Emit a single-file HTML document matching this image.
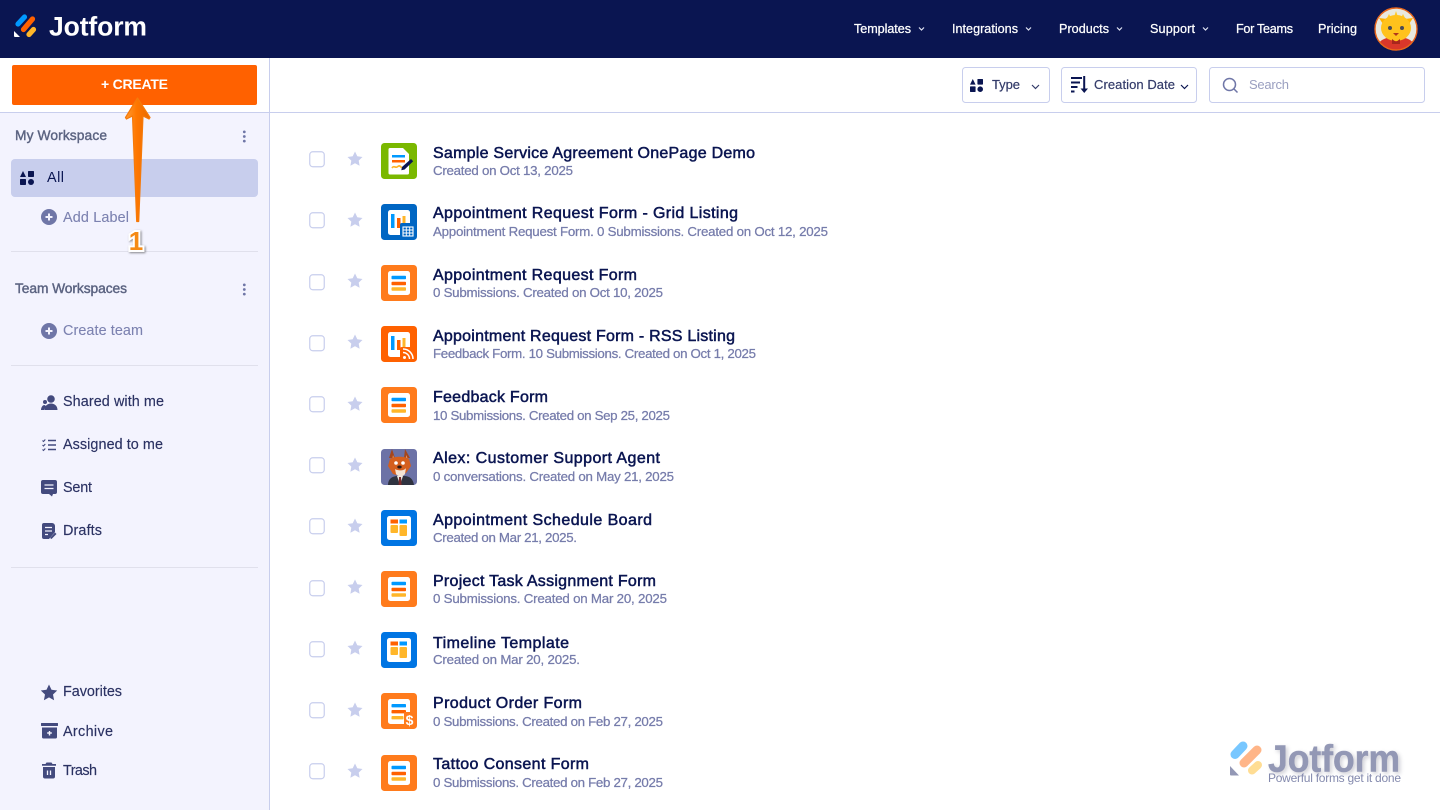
<!DOCTYPE html>
<html lang="en"><head><meta charset="utf-8"><title>Jotform</title>
<style>
html,body{margin:0;padding:0;width:1440px;height:810px;overflow:hidden;background:#fff}
svg{display:block}
text{font-family:"Liberation Sans",sans-serif}
.t{font-size:16px;fill:#0a1551;stroke:#0a1551;stroke-width:.5px}
.s{font-size:13.300px;fill:#767cab;stroke:#767cab;stroke-width:.25px}
.n{font-size:12.600px;fill:#fff;stroke:#fff;stroke-width:.25px}
.h{font-size:13.800px;fill:#5b6381;stroke:#5b6381;stroke-width:.4px}
.l{font-size:14.400px;fill:#2b3263;stroke:#2b3263;stroke-width:.15px}
.a{font-size:14.400px;fill:#7c82b0;stroke:#7c82b0;stroke-width:.1px}
.b{font-size:13px;fill:#343c6a;stroke:#343c6a;stroke-width:.2px}
</style></head><body>
<svg width="1440" height="810" viewBox="0 0 1440 810" xmlns="http://www.w3.org/2000/svg">
<defs>
<symbol id="cb" viewBox="0 0 16 17" overflow="visible"><rect x=".75" y=".75" width="14.500" height="15" rx="3" fill="#fff" stroke="#c8ceed" stroke-width="1.200"/></symbol>
<symbol id="st" viewBox="0 0 16 16"><path d="M8 .5l2.300 4.800 5.200.7-3.800 3.600.9 5.200L8 12.300l-4.600 2.500.9-5.200L.5 6l5.200-.7z" fill="#c8ceed"/></symbol>
<symbol id="form" viewBox="0 0 36 36"><rect width="36" height="36" rx="3.500" fill="#ff7b1c"/><rect x="7" y="6" width="22" height="24" rx="2.500" fill="#fff"/><rect x="10.500" y="10.800" width="14.500" height="3.400" rx=".8" fill="#0099ff"/><rect x="10.500" y="16.800" width="14.500" height="3.400" rx=".8" fill="#ff6100"/><rect x="10.500" y="22.300" width="14.500" height="3.400" rx=".8" fill="#ffb629"/></symbol>
<symbol id="app" viewBox="0 0 36 36"><rect width="36" height="36" rx="3.500" fill="#0075e3"/><rect x="6" y="6" width="24" height="24" rx="2.500" fill="#fff"/><rect x="9.500" y="9.500" width="7.500" height="4" fill="#ff6100"/><rect x="18.500" y="9.500" width="7.500" height="4" fill="#0099ff"/><rect x="9.500" y="15" width="7.500" height="8" rx="1" fill="#ffb629"/><rect x="18.500" y="15" width="7.500" height="11" rx="1" fill="#ffb629"/></symbol>
<symbol id="plus" viewBox="0 0 16 16"><circle cx="8" cy="8" r="8" fill="#6f76a7"/><path d="M8 4.500v7M4.500 8h7" stroke="#f3f3fe" stroke-width="2"/></symbol>
<symbol id="dots" viewBox="0 0 4 14"><circle cx="2" cy="2" r="1.500" fill="#6f76a7"/><circle cx="2" cy="7" r="1.500" fill="#6f76a7"/><circle cx="2" cy="12" r="1.500" fill="#6f76a7"/></symbol>
<symbol id="types" viewBox="0 0 14 14"><path d="M3 0l3 6H0z" fill="currentColor"/><rect x="8" y="0" width="6" height="6" rx=".7" fill="currentColor"/><rect x="0" y="8" width="6" height="6" rx=".7" fill="currentColor"/><circle cx="11" cy="11" r="3" fill="currentColor"/></symbol>
</defs>

<!-- sidebar -->
<rect x="0" y="113" width="269" height="697" fill="#f3f3fe"/>
<rect x="269" y="58" width="1" height="752" fill="#c8ceed"/>
<rect x="0" y="112" width="1440" height="1" fill="#c8ceed"/>

<!-- header -->
<rect width="1440" height="58" fill="#0a1551"/>
<path d="M18 24L24.500 17" stroke="#0099ff" stroke-width="5.200" stroke-linecap="round"/>
<path d="M23.500 29.500L32.500 19" stroke="#ff6100" stroke-width="5.200" stroke-linecap="round"/>
<path d="M29 34.500L33.500 29.500" stroke="#ffb629" stroke-width="5.200" stroke-linecap="round"/>
<path d="M14 31l6 6h-5a1 1 0 0 1-1-1z" fill="#fff"/>
<text x="49" y="35.500" font-size="26.500" font-weight="700" fill="#fff" textLength="98">Jotform</text>

<g class="nav">
<text class="n" x="854" y="33" textLength="57">Templates</text>
<text class="n" x="952" y="33" textLength="66">Integrations</text>
<text class="n" x="1059" y="33" textLength="50">Products</text>
<text class="n" x="1150" y="33" textLength="45">Support</text>
<text class="n" x="1236" y="33" textLength="57">For Teams</text>
<text class="n" x="1318" y="33" textLength="39">Pricing</text>
<g fill="none" stroke="#dfe2f2" stroke-width="1.200">
<path d="M919 27.500l2.500 2.500 2.500-2.500"/><path d="M1026 27.500l2.500 2.500 2.500-2.500"/><path d="M1117 27.500l2.500 2.500 2.500-2.500"/><path d="M1203 27.500l2.500 2.500 2.500-2.500"/>
</g>
</g>

<!-- avatar -->
<circle cx="1396" cy="29" r="21.500" fill="#e9e9de"/>
<clipPath id="av"><circle cx="1396" cy="29" r="21"/></clipPath>
<g clip-path="url(#av)">
<path d="M1375 52c2-12 10-15 21-15s19 3 21 15z" fill="#d9372a"/>
<path d="M1383 24l-4-6 8 1zM1409 24l4-6-8 1z" fill="#ffb100"/>
<path d="M1389 14l2 4h-4zM1396 11l2 6h-4zM1403 14l2 4h-4z" fill="#ffc828"/>
<ellipse cx="1396" cy="28" rx="15" ry="13" fill="#ffc21c"/>
<circle cx="1390" cy="28" r="2" fill="#4a4a55"/><circle cx="1402" cy="28" r="2" fill="#4a4a55"/>
<path d="M1393 33h6l-3 3z" fill="#b0371c"/>
<path d="M1392 39l4 3 4-3v5h-8z" fill="#a8261c"/>
</g>
<circle cx="1396" cy="29" r="21" fill="none" stroke="#e8651a" stroke-width="1.400"/>

<!-- create -->
<rect x="12" y="65" width="245" height="40" rx="2" fill="#ff6100"/>
<text x="101" y="89" font-size="14" font-weight="700" fill="#fff" textLength="67">+ CREATE</text>

<!-- toolbar -->
<rect x="962.500" y="67.500" width="87" height="35" rx="3" fill="#fff" stroke="#c8ceed"/>
<use href="#types" x="970" y="79" width="13" height="13" color="#0a1551"/>
<text class="b" x="992" y="89" textLength="28">Type</text>
<path d="M1032 85l3.500 3.500 3.500-3.500" fill="none" stroke="#343c6a" stroke-width="1.200"/>
<rect x="1061.500" y="67.500" width="135" height="35" rx="3" fill="#fff" stroke="#c8ceed"/>
<g fill="#0a1551"><rect x="1071" y="77" width="11" height="2"/><rect x="1071" y="81.500" width="9" height="2"/><rect x="1071" y="86" width="6.500" height="2"/><rect x="1071" y="90.500" width="3.500" height="2"/><rect x="1083.200" y="76" width="2" height="15"/><path d="M1080.500 88.500h7.500l-3.750 4.500z"/></g>
<text class="b" x="1094" y="89" textLength="81">Creation Date</text>
<path d="M1181 85l3.500 3.500 3.500-3.500" fill="none" stroke="#0a1551" stroke-width="1.200"/>
<rect x="1209.500" y="67.500" width="215" height="35" rx="3" fill="#fff" stroke="#c8ceed"/>
<circle cx="1229.500" cy="84.500" r="6" fill="none" stroke="#6f76a7" stroke-width="1.500"/>
<path d="M1234 89l3.500 3.500" stroke="#6f76a7" stroke-width="1.500"/>
<text x="1249" y="89" font-size="13" fill="#9a9fc0" textLength="40">Search</text>

<!-- sidebar content -->
<text class="h" x="15" y="140" textLength="92">My Workspace</text>
<use href="#dots" x="242.300" y="130" width="4" height="13"/>
<rect x="11" y="159" width="247" height="38" rx="4" fill="#c8ceed"/>
<use href="#types" x="20" y="171" width="14" height="14" color="#0a1551"/>
<text x="47" y="182" font-size="14.400" fill="#0a1551" textLength="17">All</text>
<use href="#plus" x="41" y="209" width="16" height="16"/>
<text class="a" x="63" y="222" textLength="66">Add Label</text>
<rect x="11" y="251" width="247" height="1" fill="#e0e0ec"/>
<text class="h" x="15" y="293" textLength="112">Team Workspaces</text>
<use href="#dots" x="242.300" y="283" width="4" height="13"/>
<use href="#plus" x="41" y="323" width="16" height="16"/>
<text class="a" x="63" y="335" textLength="80">Create team</text>
<rect x="11" y="365" width="247" height="1" fill="#e0e0ec"/>

<g fill="#434a7e">
<circle cx="51" cy="399" r="3.800"/><path d="M44.500 410c0-4 3-6.500 6.500-6.500s6.500 2.500 6.500 6.500z"/><circle cx="45" cy="402" r="2"/><path d="M41 410c0-2.500 1.500-5 3.500-5l1.500 1-2 4z"/>
</g>
<text class="l" x="63" y="406" textLength="101">Shared with me</text>
<g stroke="#434a7e" fill="none" stroke-width="1.400"><path d="M48 440.500h8M48 445h8M48 449.500h8"/><path d="M42.500 440.500l1 1 1.800-2M42.500 445l1 1 1.800-2M42.500 449.500l1 1 1.800-2" stroke-width="1.100"/></g>
<text class="l" x="63" y="449" textLength="100">Assigned to me</text>
<path d="M43 480h12a2 2 0 0 1 2 2v10a2 2 0 0 1-2 2h-2l-1 2.500-3-2.500h-6a2 2 0 0 1-2-2v-10a2 2 0 0 1 2-2z" fill="#434a7e"/><path d="M44.500 485h9M44.500 488.500h9" stroke="#f3f3fe" stroke-width="1.300"/>
<text class="l" x="63" y="492" textLength="29">Sent</text>
<path d="M44 523h8a3 3 0 0 1 3 3v6l-6 7h-5a2 2 0 0 1-2-2v-12a2 2 0 0 1 2-2z" fill="#434a7e"/><path d="M45 527.500h7M45 531h7M45 534.500h3" stroke="#f3f3fe" stroke-width="1.200"/><path d="M50 538l5-5.500 1.500 1.500-5 5z" fill="#434a7e"/>
<text class="l" x="63" y="535" textLength="39">Drafts</text>
<rect x="11" y="567" width="247" height="1" fill="#e0e0ec"/>

<path d="M49 684.500l2.500 5.300 5.700.7-4.200 4 1.100 5.700-5.100-2.800-5.100 2.800 1.100-5.700-4.200-4 5.700-.7z" fill="#434a7e"/>
<text class="l" x="63" y="696" textLength="59">Favorites</text>
<rect x="41" y="723" width="17" height="3" rx=".5" fill="#434a7e"/><path d="M42 727.500h15v9.500a1.500 1.500 0 0 1-1.500 1.500h-12a1.500 1.500 0 0 1-1.500-1.500z" fill="#434a7e"/><path d="M49.500 731v4.500M47.200 733h4.600" stroke="#f3f3fe" stroke-width="1.400"/>
<text class="l" x="63" y="736" textLength="50">Archive</text>
<path d="M45.500 764l1-1.500h5l1 1.500h3.500v1.800H42V764z" fill="#434a7e"/><path d="M43 767h12v9.500a2 2 0 0 1-2 2h-8a2 2 0 0 1-2-2z" fill="#434a7e"/><path d="M47.500 770.500v4.500M50.500 770.500v4.500" stroke="#f3f3fe" stroke-width="1.300"/>
<text class="l" x="63" y="775" textLength="34">Trash</text>

<!-- list -->
<use href="#cb" x="309" y="151" width="16" height="17"/><use href="#st" x="347" y="151" width="16" height="16"/>
<use href="#cb" x="309" y="212" width="16" height="17"/><use href="#st" x="347" y="212" width="16" height="16"/>
<use href="#cb" x="309" y="274" width="16" height="17"/><use href="#st" x="347" y="273" width="16" height="16"/>
<use href="#cb" x="309" y="335" width="16" height="17"/><use href="#st" x="347" y="334" width="16" height="16"/>
<use href="#cb" x="309" y="396" width="16" height="17"/><use href="#st" x="347" y="396" width="16" height="16"/>
<use href="#cb" x="309" y="457" width="16" height="17"/><use href="#st" x="347" y="457" width="16" height="16"/>
<use href="#cb" x="309" y="518" width="16" height="17"/><use href="#st" x="347" y="518" width="16" height="16"/>
<use href="#cb" x="309" y="580" width="16" height="17"/><use href="#st" x="347" y="579" width="16" height="16"/>
<use href="#cb" x="309" y="641" width="16" height="17"/><use href="#st" x="347" y="640" width="16" height="16"/>
<use href="#cb" x="309" y="702" width="16" height="17"/><use href="#st" x="347" y="702" width="16" height="16"/>
<use href="#cb" x="309" y="763" width="16" height="17"/><use href="#st" x="347" y="763" width="16" height="16"/>

<!-- icon 1 sign doc -->
<g transform="translate(381 143)"><rect width="36" height="36" rx="3.500" fill="#7ab800"/><path d="M9 5h13l6 6v19a1.500 1.500 0 0 1-1.500 1.500h-17.500a1.500 1.500 0 0 1-1.500-1.500V6.500A1.500 1.500 0 0 1 9 5z" fill="#fff"/><rect x="11" y="12" width="13" height="2.500" fill="#0099ff"/><rect x="11" y="17" width="13" height="2.500" fill="#ff6100"/><path d="M11 25c2-3 3 0 5-1s2-2 4 0 3-1 4-1" fill="none" stroke="#ffb629" stroke-width="1.700"/><path d="M21 24l9-8 2.200 2.300-8.600 8.200-3.300.8z" fill="#0a1551"/></g>
<!-- icon 2 grid -->
<g transform="translate(381 204)"><rect width="36" height="36" rx="3.500" fill="#0066c3"/><rect x="7" y="6" width="22" height="25" rx="2.500" fill="#fff"/><rect x="10" y="10" width="3.500" height="14" fill="#0099ff"/><rect x="16" y="14" width="3.500" height="10" fill="#ff6100"/><rect x="21.500" y="12" width="3" height="12" fill="#ffb629"/><rect x="19" y="19" width="16" height="16" rx="2" fill="#0066c3"/><rect x="22" y="23" width="10" height="9" fill="none" stroke="#fff" stroke-width="1.100"/><path d="M22 26h10M22 29h10M25.300 23v9M28.700 23v9" stroke="#fff" stroke-width=".9"/></g>
<use href="#form" x="381" y="265" width="36" height="36"/>
<!-- icon 4 rss -->
<g transform="translate(381 326)"><rect width="36" height="36" rx="3.500" fill="#ff6100"/><rect x="7" y="6" width="22" height="25" rx="2.500" fill="#fff"/><rect x="10" y="10" width="3.500" height="14" fill="#0099ff"/><rect x="16" y="14" width="3.500" height="10" fill="#ff6100"/><rect x="21.500" y="12" width="3" height="12" fill="#ffb629"/><rect x="19" y="21" width="16" height="14" rx="2" fill="#ff6100"/><circle cx="23.500" cy="31.500" r="1.500" fill="#fff"/><path d="M22 26.500a6.500 6.500 0 0 1 6.500 6.500M22 23a10 10 0 0 1 10 10" fill="none" stroke="#fff" stroke-width="1.500"/></g>
<use href="#form" x="381" y="387" width="36" height="36"/>
<!-- icon 6 alex -->
<g transform="translate(381 449)"><clipPath id="ax"><rect width="36" height="36" rx="3.500"/></clipPath><g clip-path="url(#ax)"><rect width="36" height="36" fill="#6c72a6"/>
<path d="M11 0l3 9-6 0zM24 0l-1 9 6 0z" fill="#a5461c"/><path d="M12 6l2 6h-3zM25 6l0 6h3z" fill="#e7a27a"/>
<path d="M9 10c3-3 16-3 19 0l2 7-5 7-6 3-7-2-5-8z" fill="#d45f1e"/>
<path d="M14 20c3 2 9 2 11-1l-1 6c-2 3-7 3-9 0z" fill="#f4e4d4"/>
<circle cx="15" cy="14" r="1.800" fill="#fff"/><circle cx="22" cy="14" r="1.800" fill="#fff"/><ellipse cx="18.500" cy="18" rx="2.200" ry="1.500" fill="#2a1a18"/>
<path d="M7 36c0-6 4-9 10-9h6c6 0 9 3 10 9z" fill="#2f3340"/><path d="M16 27l3 9 3-9z" fill="#f0ece6"/><path d="M18 28h2l.6 8h-3z" fill="#7a2a2a"/></g></g>
<use href="#app" x="381" y="510" width="36" height="36"/>
<use href="#form" x="381" y="571" width="36" height="36"/>
<use href="#app" x="381" y="632" width="36" height="36"/>
<!-- icon 10 product -->
<g transform="translate(381 693)"><rect width="36" height="36" rx="3.500" fill="#ff7b1c"/><rect x="7" y="6" width="22" height="25" rx="2.500" fill="#fff"/><rect x="10.500" y="11" width="14.500" height="3.400" rx=".8" fill="#0099ff"/><rect x="10.500" y="17" width="14.500" height="3.400" rx=".8" fill="#ff6100"/><rect x="10.500" y="23" width="12" height="3.400" rx=".8" fill="#ffb629"/><rect x="23" y="19" width="12" height="16" fill="#ff7b1c"/><text x="28.500" y="32" font-size="14" font-weight="700" fill="#fff" text-anchor="middle">$</text></g>
<use href="#form" x="381" y="755" width="36" height="36"/>

<text class="t" x="433" y="158" textLength="322">Sample Service Agreement OnePage Demo</text>
<text class="s" x="433" y="175" textLength="140">Created on Oct 13, 2025</text>
<text class="t" x="433" y="218" textLength="305">Appointment Request Form - Grid Listing</text>
<text class="s" x="433" y="236" textLength="395">Appointment Request Form. 0 Submissions. Created on Oct 12, 2025</text>
<text class="t" x="433" y="280" textLength="204">Appointment Request Form</text>
<text class="s" x="433" y="297" textLength="230">0 Submissions. Created on Oct 10, 2025</text>
<text class="t" x="433" y="341" textLength="302">Appointment Request Form - RSS Listing</text>
<text class="s" x="433" y="358" textLength="323">Feedback Form. 10 Submissions. Created on Oct 1, 2025</text>
<text class="t" x="433" y="402" textLength="115">Feedback Form</text>
<text class="s" x="433" y="420" textLength="237">10 Submissions. Created on Sep 25, 2025</text>
<text class="t" x="433" y="463" textLength="227">Alex: Customer Support Agent</text>
<text class="s" x="433" y="481" textLength="241">0 conversations. Created on May 21, 2025</text>
<text class="t" x="433" y="525" textLength="219">Appointment Schedule Board</text>
<text class="s" x="433" y="542" textLength="144">Created on Mar 21, 2025.</text>
<text class="t" x="433" y="586" textLength="223">Project Task Assignment Form</text>
<text class="s" x="433" y="603" textLength="234">0 Submissions. Created on Mar 20, 2025</text>
<text class="t" x="433" y="648" textLength="136">Timeline Template</text>
<text class="s" x="433" y="664" textLength="147">Created on Mar 20, 2025.</text>
<text class="t" x="433" y="708" textLength="149">Product Order Form</text>
<text class="s" x="433" y="726" textLength="230">0 Submissions. Created on Feb 27, 2025</text>
<text class="t" x="433" y="769" textLength="156">Tattoo Consent Form</text>
<text class="s" x="433" y="787" textLength="230">0 Submissions. Created on Feb 27, 2025</text>

<!-- arrow -->
<linearGradient id="ag" x1="0" y1="0" x2="1" y2="0"><stop offset="0" stop-color="#ff9a30"/><stop offset=".45" stop-color="#ff7700"/><stop offset="1" stop-color="#e86a00"/></linearGradient>
<path d="M137.500 98l12.500 19.500-1 1.500-6-3-4.300 105.500h-2l-4.200-105.500-6 3-1-1.500z" fill="url(#ag)" stroke="#f57a0a" stroke-width="1.200" stroke-linejoin="round"/>
<text x="136" y="250" font-size="26" font-weight="700" text-anchor="middle" fill="#f58a14" stroke="#fff" stroke-width="4" paint-order="stroke" style="filter:drop-shadow(1px 1px 1px rgba(40,40,40,.55))">1</text>

<!-- watermark -->
<g opacity=".55">
<path d="M1235 754.500L1243 746" stroke="#0a9bff" stroke-width="9" stroke-linecap="round"/>
<path d="M1244 763L1257 750" stroke="#ff7a28" stroke-width="9" stroke-linecap="round"/>
<path d="M1252 770.500L1258 765" stroke="#ffc23e" stroke-width="8" stroke-linecap="round"/>
<path d="M1230 766l9 9.500h-8a1 1 0 0 1-1-1z" fill="#3c4479"/>
<text x="1268" y="771.500" font-size="38" font-weight="700" fill="#3c4479" stroke="#3c4479" stroke-width=".5" textLength="132" lengthAdjust="spacingAndGlyphs" style="filter:drop-shadow(2px 2px 2px rgba(30,30,60,.4))">Jotform</text>
</g>
<text x="1268" y="782" font-size="12" fill="#8389ad" textLength="133">Powerful forms get it done</text>
</svg>
</body></html>
